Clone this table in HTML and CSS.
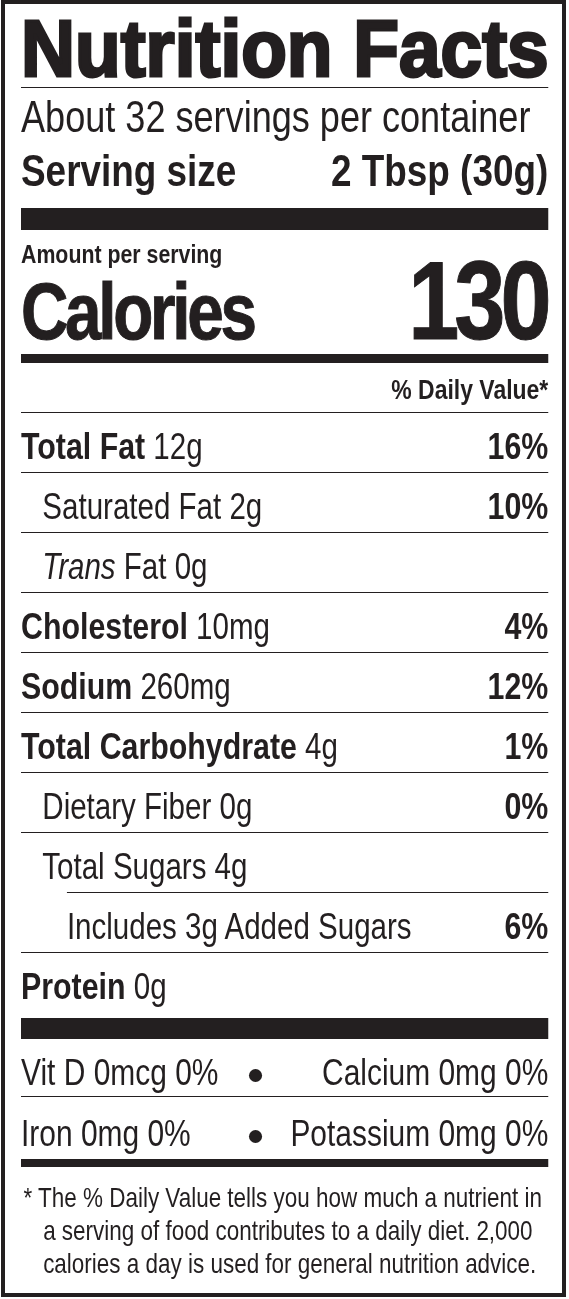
FILE: index.html
```html
<!DOCTYPE html>
<html lang="en">
<head>
    <meta charset="UTF-8">
    <meta name="viewport" content="width=device-width, initial-scale=1.0">
    <title>Nutrition Facts</title>
    <link rel="stylesheet" href="styles.css">
</head>
<body>
    <div class="label">
        <!-- внутренний слой сжат по ширине, как узкий шрифт этикетки -->
        <div class="label-inner">
            <h1 class="title">Nutrition Facts</h1>
            <div class="servings">About 32 servings per container</div>
            <div class="serving-size">
                <span>Serving size</span>
                <span>2 Tbsp (30g)</span>
            </div>

            <div class="bar-thick"></div>

            <!-- Калории -->
            <div class="calories">
                <div>
                    <div class="amount">Amount per serving</div>
                    <div class="cal-label">Calories</div>
                </div>
                <div class="cal-value">130</div>
            </div>

            <div class="bar-medium"></div>

            <div class="dv-head">% Daily Value*</div>

            <div class="row"><span><b>Total Fat</b> 12g</span><b>16%</b></div>
            <div class="row sub"><span>Saturated Fat 2g</span><b>10%</b></div>
            <div class="row sub"><span><i>Trans</i> Fat 0g</span></div>
            <div class="row"><span><b>Cholesterol</b> 10mg</span><b>4%</b></div>
            <div class="row"><span><b>Sodium</b> 260mg</span><b>12%</b></div>
            <div class="row"><span><b>Total Carbohydrate</b> 4g</span><b>1%</b></div>
            <div class="row sub"><span>Dietary Fiber 0g</span><b>0%</b></div>
            <div class="row sub"><span>Total Sugars 4g</span></div>
            <div class="row added"><span>Includes 3g Added Sugars</span><b>6%</b></div>
            <div class="row protein"><span><b>Protein</b> 0g</span></div>

            <div class="bar-thick bar-lower"></div>

            <!-- Витамины и минералы -->
            <div class="mineral first">
                <span>Vit D 0mcg 0%</span>
                <span class="dot"></span>
                <span class="right">Calcium 0mg 0%</span>
            </div>
            <div class="mineral second">
                <span>Iron 0mg 0%</span>
                <span class="dot"></span>
                <span class="right">Potassium 0mg 0%</span>
            </div>

            <div class="bar-medium bar-bottom"></div>

            <p class="footnote">* The % Daily Value tells you how much a nutrient in<br>a serving of food contributes to a daily diet. 2,000<br>calories a day is used for general nutrition advice.</p>
        </div>
    </div>
</body>
</html>
```

FILE: styles.css
```css
/* Основные стили */
:root {
    --ink: #231f20;
}

body {
    margin: 0;
    background: white;
    color: var(--ink);
    font-family: "Liberation Sans", Arial, sans-serif;
}

.label {
    width: 527px;
    margin: 0 0 0 1px;
    padding: 0 14px 0 16px;
    border: 4px solid var(--ink);
    overflow: hidden;
}

/* все горизонтальные размеры ниже заданы до сжатия (x 0.82) */
.label-inner {
    width: 643px;
    transform: scaleX(0.82);
    transform-origin: 0 0;
}

/* Заголовок */
.title {
    margin: 0;
    padding-top: 6px;
    font-size: 80px;
    line-height: 77px;
    font-weight: bold;
    white-space: nowrap;
    transform: scaleX(1.14);
    transform-origin: left;
    -webkit-text-stroke: 3px var(--ink);
}

.servings {
    border-top: 1px solid var(--ink);
    font-size: 44px;
    line-height: 57px;
    white-space: nowrap;
}

.serving-size {
    display: flex;
    justify-content: space-between;
    font-size: 45px;
    line-height: 52px;
    font-weight: bold;
}

.bar-thick {
    height: 22px;
    margin-top: 11px;
    background: var(--ink);
}

/* Калории */
.calories {
    display: flex;
    justify-content: space-between;
    font-weight: bold;
}

.amount {
    padding-top: 9px;
    font-size: 26px;
    line-height: 30px;
}

.cal-label {
    font-size: 80px;
    line-height: 85px;
    letter-spacing: -4px;
    -webkit-text-stroke: 1px var(--ink);
}

.cal-value {
    align-self: flex-end;
    font-size: 112px;
    line-height: 106px;
    letter-spacing: -6px;
    margin-right: 2px;
    -webkit-text-stroke: 1px var(--ink);
}

.bar-medium {
    height: 9px;
    background: var(--ink);
}

.dv-head {
    padding: 12px 0 7px;
    text-align: right;
    font-size: 28px;
    line-height: 30px;
    font-weight: bold;
}

/* Строки нутриентов */
.row {
    display: flex;
    justify-content: space-between;
    box-sizing: border-box;
    height: 60px;
    padding-top: 14px;
    border-top: 1px solid var(--ink);
    font-size: 36px;
    line-height: 40px;
    white-space: nowrap;
}

.row b {
    font-size: 37px;
}

.row.sub span:first-child {
    padding-left: 26px;
}

.row.added {
    margin-left: 56px;
}

.row.protein {
    height: 66px;
}

.bar-lower {
    height: 21px;
    margin-top: 0;
}

.mineral {
    display: grid;
    grid-template-columns: 278px 16px 1fr;
    align-items: center;
    box-sizing: border-box;
    font-size: 36.5px;
    line-height: 40px;
    white-space: nowrap;
}

.mineral.first {
    height: 58px;
    padding-top: 11px;
    border-bottom: 1px solid var(--ink);
}

.mineral.second {
    height: 62px;
    padding-top: 12px;
}

.mineral .right {
    justify-self: end;
}

.dot {
    width: 16px;
    height: 13px;
    margin-top: 4px;
    border-radius: 50%;
    background: var(--ink);
}

.bar-bottom {
    height: 8px;
}

.footnote {
    margin: 0;
    padding: 14px 0 13px 27px;
    text-indent: -24px;
    font-size: 27.4px;
    line-height: 33px;
    white-space: nowrap;
}
```
